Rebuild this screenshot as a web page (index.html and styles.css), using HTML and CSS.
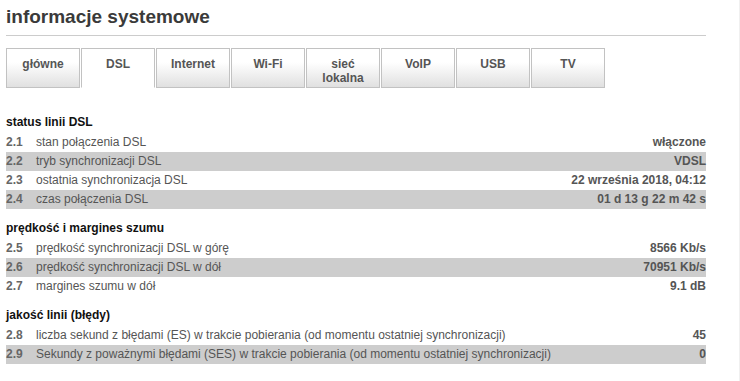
FILE: index.html
```html
<!DOCTYPE html>
<html lang="pl">
<head>
    <meta charset="UTF-8">
    <meta name="viewport" content="width=device-width, initial-scale=1.0">
    <title>informacje systemowe</title>
    <link rel="stylesheet" href="styles.css">
</head>
<body>
    <div class="frame">
        <div class="page">
            <h1 class="title">informacje systemowe</h1>
            <ul class="tabs">
                <li class="tab">główne</li>
                <li class="tab active">DSL</li>
                <li class="tab">Internet</li>
                <li class="tab">Wi-Fi</li>
                <li class="tab">sieć<br>lokalna</li>
                <li class="tab">VoIP</li>
                <li class="tab">USB</li>
                <li class="tab">TV</li>
            </ul>

            <div class="section first">
                <h2>status linii DSL</h2>
                <div class="row"><span class="num">2.1</span><span class="label">stan połączenia DSL</span><span class="value">włączone</span></div>
                <div class="row"><span class="num">2.2</span><span class="label">tryb synchronizacji DSL</span><span class="value">VDSL</span></div>
                <div class="row"><span class="num">2.3</span><span class="label">ostatnia synchronizacja DSL</span><span class="value">22 września 2018, 04:12</span></div>
                <div class="row"><span class="num">2.4</span><span class="label">czas połączenia DSL</span><span class="value">01 d 13 g 22 m 42 s</span></div>
            </div>

            <div class="section">
                <h2>prędkość i margines szumu</h2>
                <div class="row"><span class="num">2.5</span><span class="label">prędkość synchronizacji DSL w górę</span><span class="value">8566 Kb/s</span></div>
                <div class="row"><span class="num">2.6</span><span class="label">prędkość synchronizacji DSL w dół</span><span class="value">70951 Kb/s</span></div>
                <div class="row"><span class="num">2.7</span><span class="label">margines szumu w dół</span><span class="value">9.1 dB</span></div>
            </div>

            <div class="section">
                <h2>jakość linii (błędy)</h2>
                <div class="row"><span class="num">2.8</span><span class="label">liczba sekund z błędami (ES) w trakcie pobierania (od momentu ostatniej synchronizacji)</span><span class="value">45</span></div>
                <div class="row"><span class="num">2.9</span><span class="label">Sekundy z poważnymi błędami (SES) w trakcie pobierania (od momentu ostatniej synchronizacji)</span><span class="value">0</span></div>
            </div>
        </div>
    </div>
</body>
</html>
```

FILE: styles.css
```css
body {
    margin: 0;
    font-family: "Liberation Sans", Arial, sans-serif;
    font-size: 12px;
    background-color: #fff;
}
.frame {
    width: 739px;
    height: 381px;
    border-right: 1px solid #f0f0f0;
    overflow: hidden;
}
.page {
    width: 700px;
    margin-left: 6px;
}
.title {
    margin: 0;
    padding: 5px 0 6px;
    font-size: 19px;
    line-height: 24px;
    font-weight: bold;
    color: #3a3a3a;
    border-bottom: 1px solid #ccc;
}
.tabs {
    display: flex;
    list-style: none;
    margin: 12px 0 0;
    padding: 0;
}
.tab {
    box-sizing: border-box;
    width: 74px;
    height: 40px;
    margin-right: 1px;
    padding-top: 8px;
    border: 1px solid #c2c2c2;
    background: linear-gradient(#fff 35%, #e0e0e0);
    text-align: center;
    font-weight: bold;
    line-height: 14px;
    color: #555;
}
.tab.active {
    background: #fff;
    border-bottom-color: #fff;
}
.section {
    margin-top: 11px;
}
.section.first {
    margin-top: 26px;
}
.section h2 {
    margin: 0 0 3px;
    font-size: 12px;
    line-height: 16px;
    font-weight: bold;
    color: #111;
}
.row {
    display: flex;
    height: 19px;
    line-height: 19px;
    color: #555;
}
.row:nth-child(odd) {
    background-color: #cdcdcd;
}
.row .num {
    width: 30px;
    font-weight: bold;
    color: #666;
}
.row .label {
    flex: 1;
}
.row .value {
    font-weight: bold;
    text-align: right;
}
```
